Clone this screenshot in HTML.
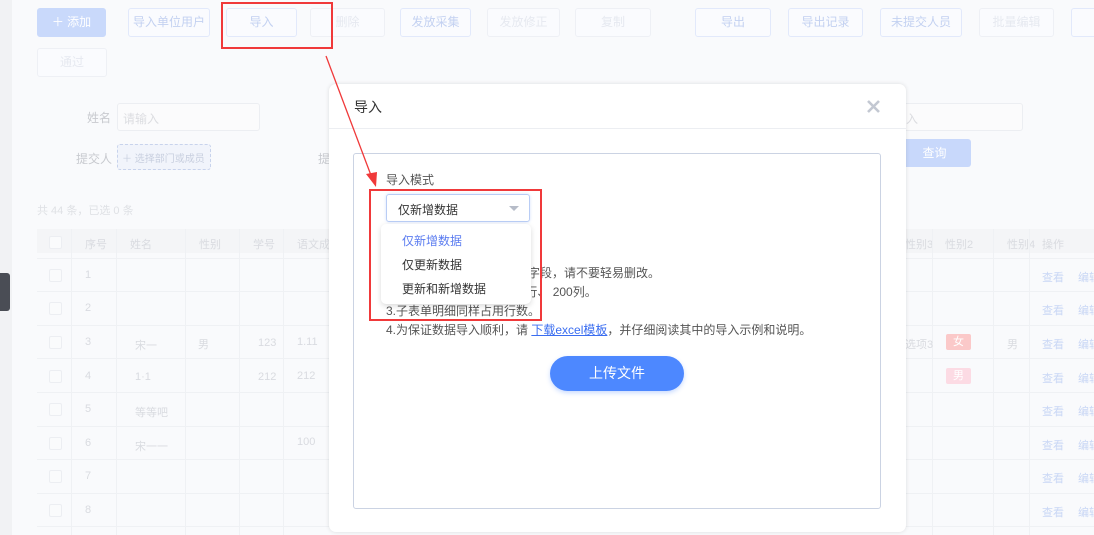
<!DOCTYPE html>
<html><head><meta charset="utf-8"><style>
*{margin:0;padding:0;box-sizing:border-box}
body{width:1094px;height:535px;overflow:hidden;position:relative;background:#f9fafc;font-family:"Liberation Sans","Noto Sans CJK SC",sans-serif;font-size:12px;color:#333}
.a{position:absolute;white-space:nowrap}
.btn{position:absolute;white-space:nowrap;top:8px;height:29px;border:1px solid #e2e9fb;border-radius:3px;background:#fafbfe;color:#c3d1f1;text-align:center;line-height:27px;font-size:12px}
.btn.d{color:#e6e9f0;border-color:#eef0f5}
.t{position:absolute;white-space:nowrap;color:#d9dbe0;font-size:11px}
.row{position:absolute;left:37px;width:1057px;height:1px;background:#eff1f4}
.cb{position:absolute;left:49px;width:13px;height:13px;border:1px solid #eceef2;border-radius:2px;background:#fafbfc}
.lk{position:absolute;white-space:nowrap;color:#c9d7f5;font-size:11px}
</style></head><body>
<div class="a" style="left:0;top:0;width:12px;height:535px;background:#f1f2f4"></div>
<div class="a" style="left:0;top:273px;width:10px;height:38px;background:#4a4d55;border-radius:0 3px 3px 0"></div>

<div class="btn" style="left:37px;width:69px;background:#c9d9fb;border-color:#c9d9fb;color:#fff">＋ 添加</div>
<div class="btn" style="left:128px;width:82px">导入单位用户</div>
<div class="btn" style="left:226px;width:71px">导入</div>
<div class="btn d" style="left:310px;width:75px">删除</div>
<div class="btn" style="left:400px;width:71px">发放采集</div>
<div class="btn d" style="left:487px;width:73px">发放修正</div>
<div class="btn d" style="left:575px;width:76px">复制</div>
<div class="btn" style="left:695px;width:76px">导出</div>
<div class="btn" style="left:788px;width:75px">导出记录</div>
<div class="btn" style="left:880px;width:82px">未提交人员</div>
<div class="btn d" style="left:979px;width:75px">批量编辑</div>
<div class="btn" style="left:1071px;width:40px"></div>
<div class="btn d" style="left:37px;top:48px;width:70px">通过</div>

<div class="t" style="left:87px;top:109px;color:#c8cacf;font-size:12px">姓名</div>
<div class="a" style="left:117px;top:103px;width:143px;height:28px;border:1px solid #eceef2;background:#fbfbfc;border-radius:3px;color:#dcdde1;padding:6px 5px">请输入</div>
<div class="t" style="left:76px;top:150px;color:#c8cacf;font-size:12px">提交人</div>
<div class="a" style="left:117px;top:144px;width:94px;height:26px;border:1px dashed #c8d3ec;background:#f1f4fb;border-radius:3px;color:#c8cfdf;padding:5px 4px;font-size:10px;overflow:hidden">＋ 选择部门或成员</div>
<div class="t" style="left:318px;top:150px;color:#c8cacf;font-size:12px">提</div>
<div class="a" style="left:880px;top:103px;width:143px;height:28px;border:1px solid #eceef2;background:#fbfbfc;border-radius:3px;color:#dcdde1;padding:6px 25px">入</div>
<div class="a" style="left:880px;top:139px;width:91px;height:28px;background:#c8d8fb;border-radius:3px;color:#fff;text-align:center;line-height:28px;padding-left:18px">查询</div>
<div class="t" style="left:37px;top:202px;color:#dfe1e5">共 44 条，已选 0 条</div>

<div class="a" style="left:37px;top:229px;width:1057px;height:24px;background:#f4f5f7"></div>
<div class="cb" style="top:236px"></div>
<div class="t" style="left:85px;top:236px">序号</div><div class="t" style="left:130px;top:236px">姓名</div>
<div class="t" style="left:199px;top:236px">性别</div><div class="t" style="left:253px;top:236px">学号</div>
<div class="t" style="left:297px;top:236px">语文成绩</div>
<div class="t" style="left:905px;top:236px">性别3</div><div class="t" style="left:945px;top:236px">性别2</div>
<div class="t" style="left:1007px;top:236px">性别4</div><div class="t" style="left:1042px;top:236px">操作</div>

<div class="row" style="top:258px"></div><div class="row" style="top:291px"></div><div class="row" style="top:325px"></div><div class="row" style="top:358px"></div><div class="row" style="top:392px"></div><div class="row" style="top:426px"></div><div class="row" style="top:459px"></div><div class="row" style="top:493px"></div><div class="row" style="top:526px"></div>
<div class="a" style="left:71px;top:229px;width:1px;height:306px;background:#eff1f4"></div>
<div class="a" style="left:116px;top:229px;width:1px;height:306px;background:#eff1f4"></div>
<div class="a" style="left:185px;top:229px;width:1px;height:306px;background:#eff1f4"></div>
<div class="a" style="left:239px;top:229px;width:1px;height:306px;background:#eff1f4"></div>
<div class="a" style="left:283px;top:229px;width:1px;height:306px;background:#eff1f4"></div>
<div class="a" style="left:932px;top:229px;width:1px;height:306px;background:#eff1f4"></div>
<div class="a" style="left:993px;top:229px;width:1px;height:306px;background:#eff1f4"></div>
<div class="a" style="left:1029px;top:229px;width:1px;height:306px;background:#eff1f4"></div>

<div class="cb" style="top:269px"></div><div class="t" style="left:85px;top:269px">1</div>
<div class="cb" style="top:302px"></div><div class="t" style="left:85px;top:302px">2</div>
<div class="cb" style="top:336px"></div><div class="t" style="left:85px;top:336px">3</div>
<div class="cb" style="top:370px"></div><div class="t" style="left:85px;top:370px">4</div>
<div class="cb" style="top:403px"></div><div class="t" style="left:85px;top:403px">5</div>
<div class="cb" style="top:437px"></div><div class="t" style="left:85px;top:437px">6</div>
<div class="cb" style="top:470px"></div><div class="t" style="left:85px;top:470px">7</div>
<div class="cb" style="top:504px"></div><div class="t" style="left:85px;top:504px">8</div>
<div class="t" style="left:135px;top:337px">宋一</div><div class="t" style="left:198px;top:336px">男</div>
<div class="t" style="left:258px;top:337px">123</div><div class="t" style="left:297px;top:336px">1.11</div>
<div class="t" style="left:135px;top:371px">1·1</div><div class="t" style="left:258px;top:371px">212</div><div class="t" style="left:297px;top:370px">212</div>
<div class="t" style="left:135px;top:404px">等等吧</div>
<div class="t" style="left:135px;top:438px">宋一一</div><div class="t" style="left:297px;top:436px">100</div>
<div class="t" style="left:905px;top:336px">选项3</div>
<div class="a" style="left:946px;top:334px;width:25px;height:16px;background:#fbc9c9;border-radius:2px;color:#fff;text-align:center;font-size:11px;line-height:16px">女</div>
<div class="a" style="left:946px;top:368px;width:25px;height:16px;background:#fcdbe4;border-radius:2px;color:#fff;text-align:center;font-size:11px;line-height:16px">男</div>
<div class="t" style="left:1007px;top:336px">男</div>
<div class="lk" style="left:1042px;top:269px">查看</div><div class="lk" style="left:1078px;top:269px">编辑</div>
<div class="lk" style="left:1042px;top:302px">查看</div><div class="lk" style="left:1078px;top:302px">编辑</div>
<div class="lk" style="left:1042px;top:336px">查看</div><div class="lk" style="left:1078px;top:336px">编辑</div>
<div class="lk" style="left:1042px;top:370px">查看</div><div class="lk" style="left:1078px;top:370px">编辑</div>
<div class="lk" style="left:1042px;top:403px">查看</div><div class="lk" style="left:1078px;top:403px">编辑</div>
<div class="lk" style="left:1042px;top:437px">查看</div><div class="lk" style="left:1078px;top:437px">编辑</div>
<div class="lk" style="left:1042px;top:470px">查看</div><div class="lk" style="left:1078px;top:470px">编辑</div>
<div class="lk" style="left:1042px;top:504px">查看</div><div class="lk" style="left:1078px;top:504px">编辑</div>

<!-- modal -->
<div class="a" style="left:329px;top:84px;width:577px;height:448px;background:#fff;border-radius:7px;box-shadow:0 0 4px rgba(0,0,0,.12)"></div>
<div class="a" style="left:354px;top:97px;font-size:14px;color:#333">导入</div>
<div class="a" style="left:329px;top:128px;width:577px;height:1px;background:#eceef2"></div>
<svg class="a" style="left:866px;top:99px" width="15" height="15"><path d="M2 2L13 13M13 2L2 13" stroke="#c3c8d2" stroke-width="2.6"/></svg>
<div class="a" style="left:353px;top:153px;width:528px;height:356px;border:1px solid #cbd3e3;border-radius:3px"></div>
<div class="a" style="left:386px;top:171px;color:#555">导入模式</div>
<div class="a" style="left:386px;top:194px;width:144px;height:28px;border:1px solid #b9cdf5;border-radius:3px;box-shadow:0 0 3px #d6e2fb;padding:6px 11px;color:#333">仅新增数据</div>
<div class="a" style="left:509px;top:206px;width:0;height:0;border-left:5px solid transparent;border-right:5px solid transparent;border-top:5px solid #b6bcc8"></div>
<div class="a" style="left:386px;top:264px;color:#555;line-height:19px;font-size:12px">1.模板中的表头名称为表单字段，请不要轻易删改。<br>2.单次导入最多支持10000行、 200列。<br>3.子表单明细同样占用行数。<br>4.为保证数据导入顺利，请 <span style="color:#3a6df0;text-decoration:underline">下载excel模板</span>，并仔细阅读其中的导入示例和说明。</div>
<div class="a" style="left:381px;top:224px;width:150px;height:80px;background:#fff;border-radius:5px;box-shadow:0 2px 6px rgba(0,0,0,.15)"></div>
<div class="a" style="left:402px;top:232px;color:#5b7cf0">仅新增数据</div>
<div class="a" style="left:402px;top:256px;color:#333">仅更新数据</div>
<div class="a" style="left:402px;top:280px;color:#333">更新和新增数据</div>
<div class="a" style="left:550px;top:356px;width:134px;height:35px;background:#4d88ff;border-radius:18px;color:#fff;text-align:center;line-height:35px;font-size:14px;box-shadow:0 2px 5px rgba(77,136,255,.3)">上传文件</div>

<!-- annotations -->
<div class="a" style="left:221px;top:2px;width:112px;height:47px;border:2px solid #f0393a"></div>
<div class="a" style="left:369px;top:189px;width:173px;height:132px;border:2px solid #f0393a"></div>
<svg class="a" style="left:0;top:0" width="1094" height="535"><line x1="326" y1="56" x2="372" y2="178" stroke="#f0393a" stroke-width="1.3"/><path d="M366 174L376 187L377 172Z" fill="#f0393a"/></svg>
</body></html>
